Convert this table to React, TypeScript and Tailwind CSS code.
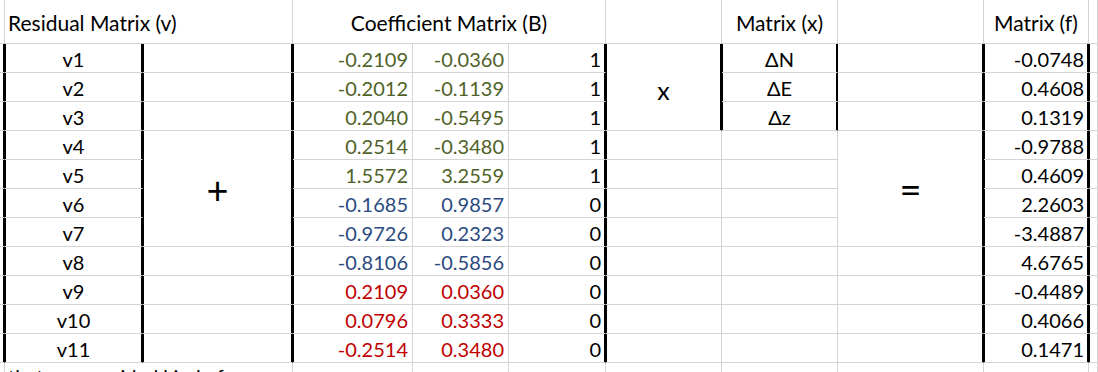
import React from "react";

type Row = {
  v: string;
  b1: string;
  b2: string;
  b3: string;
  x?: string;
  f: string;
  tone: "green" | "blue" | "red";
};

const rows: Row[] = [
  { v: "v1", b1: "-0.2109", b2: "-0.0360", b3: "1", x: "ΔN", f: "-0.0748", tone: "green" },
  { v: "v2", b1: "-0.2012", b2: "-0.1139", b3: "1", x: "ΔE", f: "0.4608", tone: "green" },
  { v: "v3", b1: "0.2040", b2: "-0.5495", b3: "1", x: "Δz", f: "0.1319", tone: "green" },
  { v: "v4", b1: "0.2514", b2: "-0.3480", b3: "1", f: "-0.9788", tone: "green" },
  { v: "v5", b1: "1.5572", b2: "3.2559", b3: "1", f: "0.4609", tone: "green" },
  { v: "v6", b1: "-0.1685", b2: "0.9857", b3: "0", f: "2.2603", tone: "blue" },
  { v: "v7", b1: "-0.9726", b2: "0.2323", b3: "0", f: "-3.4887", tone: "blue" },
  { v: "v8", b1: "-0.8106", b2: "-0.5856", b3: "0", f: "4.6765", tone: "blue" },
  { v: "v9", b1: "0.2109", b2: "0.0360", b3: "0", f: "-0.4489", tone: "red" },
  { v: "v10", b1: "0.0796", b2: "0.3333", b3: "0", f: "0.4066", tone: "red" },
  { v: "v11", b1: "-0.2514", b2: "0.3480", b3: "0", f: "0.1471", tone: "red" },
];

const toneClass = {
  green: "text-[#4f6228]",
  blue: "text-[#2b4a80]",
  red: "text-[#c00000]",
};

// thick black rules sit on top of the grey gridlines
const edge = {
  none: "",
  left: "shadow-[inset_1px_0_0_#000]",
  right: "border-r-black shadow-[inset_-1px_0_0_#000]",
  both: "border-r-black shadow-[inset_1px_0_0_#000,inset_-1px_0_0_#000]",
};

function Cell({
  className = "",
  side = "none",
  children,
}: {
  className?: string;
  side?: keyof typeof edge;
  children?: React.ReactNode;
}) {
  return (
    <div
      className={`flex items-center overflow-visible whitespace-nowrap border-r border-b border-[#d4d4d4] ${edge[side]} ${className}`}
    >
      {children}
    </div>
  );
}

export default function App() {
  return (
    <div className="h-[372px] w-[1098px] overflow-hidden bg-white font-['Lato',sans-serif] text-[20px] leading-none text-black">
      <div className="grid grid-cols-[5px_138px_150px_120px_96px_97px_116px_116px_146px_105px_1fr] grid-rows-[44px_repeat(12,29px)]">
        {/* header */}
        <Cell />
        <Cell className="col-span-2 pl-[3px] pt-[2px] text-[21px]">Residual Matrix (v)</Cell>
        <Cell className="col-span-3 justify-center pt-[2px] text-[21px]">Coefficient Matrix (B)</Cell>
        <Cell />
        <Cell className="justify-center pt-[2px] text-[21px]">Matrix (x)</Cell>
        <Cell />
        <Cell className="justify-center pt-[2px] text-[21px]">Matrix (f)</Cell>
        <Cell />

        {rows.map((r, i) => {
          const n = i + 1;
          const num = `justify-end pr-[4px] ${toneClass[r.tone]}`;
          return (
            <React.Fragment key={r.v}>
              <Cell side="right" />
              <Cell side="both" className="justify-center pt-[2px]">
                {r.v}
              </Cell>
              {n === 4 && (
                <Cell side="both" className="row-span-4 justify-center">
                  <span className="text-[38px] leading-none">+</span>
                </Cell>
              )}
              {(n <= 3 || n >= 8) && <Cell side="both" />}
              <Cell side="left" className={`${num} pt-[2px]`}>
                {r.b1}
              </Cell>
              <Cell className={`${num} pt-[2px]`}>{r.b2}</Cell>
              <Cell side="right" className="justify-end pr-[4px] pt-[2px]">
                {r.b3}
              </Cell>
              {n === 1 && (
                <Cell side="both" className="row-span-3 justify-center pt-[6px]">
                  <span className="text-[25px] leading-none">x</span>
                </Cell>
              )}
              {n >= 4 && <Cell side="left" />}
              <Cell side={n <= 3 ? "both" : "none"} className="justify-center pt-[2px]">
                {r.x}
              </Cell>
              {n <= 3 && <Cell side="right" />}
              {n === 4 && (
                <Cell side="right" className="row-span-4 justify-center">
                  <span className="text-[38px] leading-none">=</span>
                </Cell>
              )}
              {n >= 8 && <Cell side="right" />}
              <Cell side="both" className="justify-end pr-[4px] pt-[2px]">
                {r.f}
              </Cell>
              <Cell side="left" />
            </React.Fragment>
          );
        })}

        {/* last row, cut off by the window edge */}
        <Cell />
        <Cell className="col-span-2 items-start pl-[3px] pt-[3px]">that are provided kind of</Cell>
        <Cell />
        <Cell />
        <Cell />
        <Cell />
        <Cell />
        <Cell />
        <Cell />
        <Cell />
      </div>
    </div>
  );
}
